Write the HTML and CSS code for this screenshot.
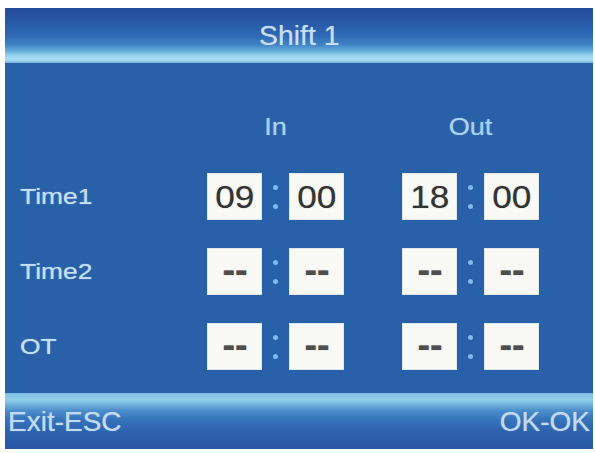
FILE: index.html
```html
<!DOCTYPE html>
<html>
<head>
<meta charset="utf-8">
<link rel="stylesheet" href="styles.css">
</head>
<body>
<div class="screen">
  <div class="header"><span class="title">Shift 1</span></div>
  <div class="main">
    <div class="row head-row">
      <div class="label"></div>
      <div class="group"><span class="col-title">In</span></div>
      <div class="spacer"></div>
      <div class="group"><span class="col-title">Out</span></div>
    </div>
    <div class="row">
      <div class="label"><span>Time1</span></div>
      <div class="group">
        <div class="box"><span>09</span></div>
        <div class="colon"><i></i><i></i></div>
        <div class="box"><span>00</span></div>
      </div>
      <div class="spacer"></div>
      <div class="group">
        <div class="box"><span>18</span></div>
        <div class="colon"><i></i><i></i></div>
        <div class="box"><span>00</span></div>
      </div>
    </div>
    <div class="row">
      <div class="label"><span>Time2</span></div>
      <div class="group">
        <div class="box dash"><span>--</span></div>
        <div class="colon"><i></i><i></i></div>
        <div class="box dash"><span>--</span></div>
      </div>
      <div class="spacer"></div>
      <div class="group">
        <div class="box dash"><span>--</span></div>
        <div class="colon"><i></i><i></i></div>
        <div class="box dash"><span>--</span></div>
      </div>
    </div>
    <div class="row">
      <div class="label"><span>OT</span></div>
      <div class="group">
        <div class="box dash"><span>--</span></div>
        <div class="colon"><i></i><i></i></div>
        <div class="box dash"><span>--</span></div>
      </div>
      <div class="spacer"></div>
      <div class="group">
        <div class="box dash"><span>--</span></div>
        <div class="colon"><i></i><i></i></div>
        <div class="box dash"><span>--</span></div>
      </div>
    </div>
  </div>
  <div class="footer">
    <span class="fkey">Exit-ESC</span>
    <span class="fkey">OK-OK</span>
  </div>
</div>
</body>
</html>
```

FILE: styles.css
```css
html, body {
  margin: 0;
  padding: 0;
  background: #ffffff;
}
body {
  width: 595px;
  height: 453px;
  overflow: hidden;
  font-family: "Liberation Sans", Arial, sans-serif;
}
.screen {
  margin: 8px 2px 0 5px;
  width: 588px;
  height: 441px;
  display: flex;
  flex-direction: column;
  background: #2961a9;
}
.header {
  height: 55px;
  flex: none;
  display: flex;
  justify-content: center;
  align-items: flex-start;
  background: linear-gradient(to bottom, #234d9c 0%, #2858a7 25%, #2f68b4 50%, #3f82c4 66%, #67addc 78%, #9bd4ef 87%, #a8ddf3 94%, #72b4de 100%);
}
.title {
  margin-top: 13px;
  font-size: 27px;
  line-height: 30px;
  color: #c9def2;
  display: inline-block;
  transform: scaleX(1.05);
  text-shadow: 0 0 1px rgba(201, 222, 242, 0.6);
}
.main {
  flex: 1;
  padding-top: 49px;
  display: flex;
  flex-direction: column;
  gap: 28px;
}
.row {
  display: flex;
  height: 47px;
  align-items: stretch;
}
.row.head-row {
  height: 30px;
  margin-bottom: 3px;
}
.label {
  width: 187px;
  padding-left: 15px;
  display: flex;
  align-items: center;
}
.label span {
  font-size: 22px;
  color: #c6e0f6;
  display: inline-block;
  transform: scaleX(1.2);
  transform-origin: left center;
  text-shadow: 0 0 1px rgba(198, 224, 246, 0.7);
}
.group {
  width: 137px;
  display: flex;
  justify-content: space-between;
  align-items: stretch;
}
.head-row .group {
  justify-content: center;
  align-items: center;
}
.col-title {
  font-size: 23px;
  color: #a9d1f1;
  display: inline-block;
  transform: scaleX(1.18);
  text-shadow: 0 0 1px rgba(169, 209, 241, 0.7);
}
.spacer {
  width: 58px;
}
.box {
  width: 55px;
  background: #f9f9f6;
  box-shadow: inset 0 0 0 1px #e2e6ea;
  display: flex;
  justify-content: center;
  align-items: center;
}
.box span {
  font-size: 32px;
  color: #333333;
  display: inline-block;
  transform: scaleX(1.1);
  line-height: 1;
  text-shadow: 0 0 1px rgba(51, 51, 51, 0.5);
}
.box.dash span {
  font-size: 36px;
  font-weight: bold;
  color: #4e4e4e;
  letter-spacing: 0;
  margin-top: -3px;
  transform: scaleX(1.05);
}
.colon {
  width: 27px;
  display: flex;
  flex-direction: column;
  align-items: center;
  justify-content: center;
  gap: 14px;
}
.colon i {
  width: 5px;
  height: 5px;
  border-radius: 50%;
  background: #7dbbee;
}
.footer {
  height: 56px;
  flex: none;
  display: flex;
  justify-content: space-between;
  align-items: center;
  padding: 2px 3px 0 3px;
  box-sizing: border-box;
  background: linear-gradient(to bottom, #7cc0e4 0%, #92cde9 12%, #74b4de 20%, #4a8cca 32%, #3572ba 48%, #2c62ae 70%, #2756a3 100%);
}
.fkey {
  font-size: 28px;
  color: #c3dbf1;
  line-height: 30px;
  text-shadow: 0 0 1px rgba(195, 219, 241, 0.7);
}
```
